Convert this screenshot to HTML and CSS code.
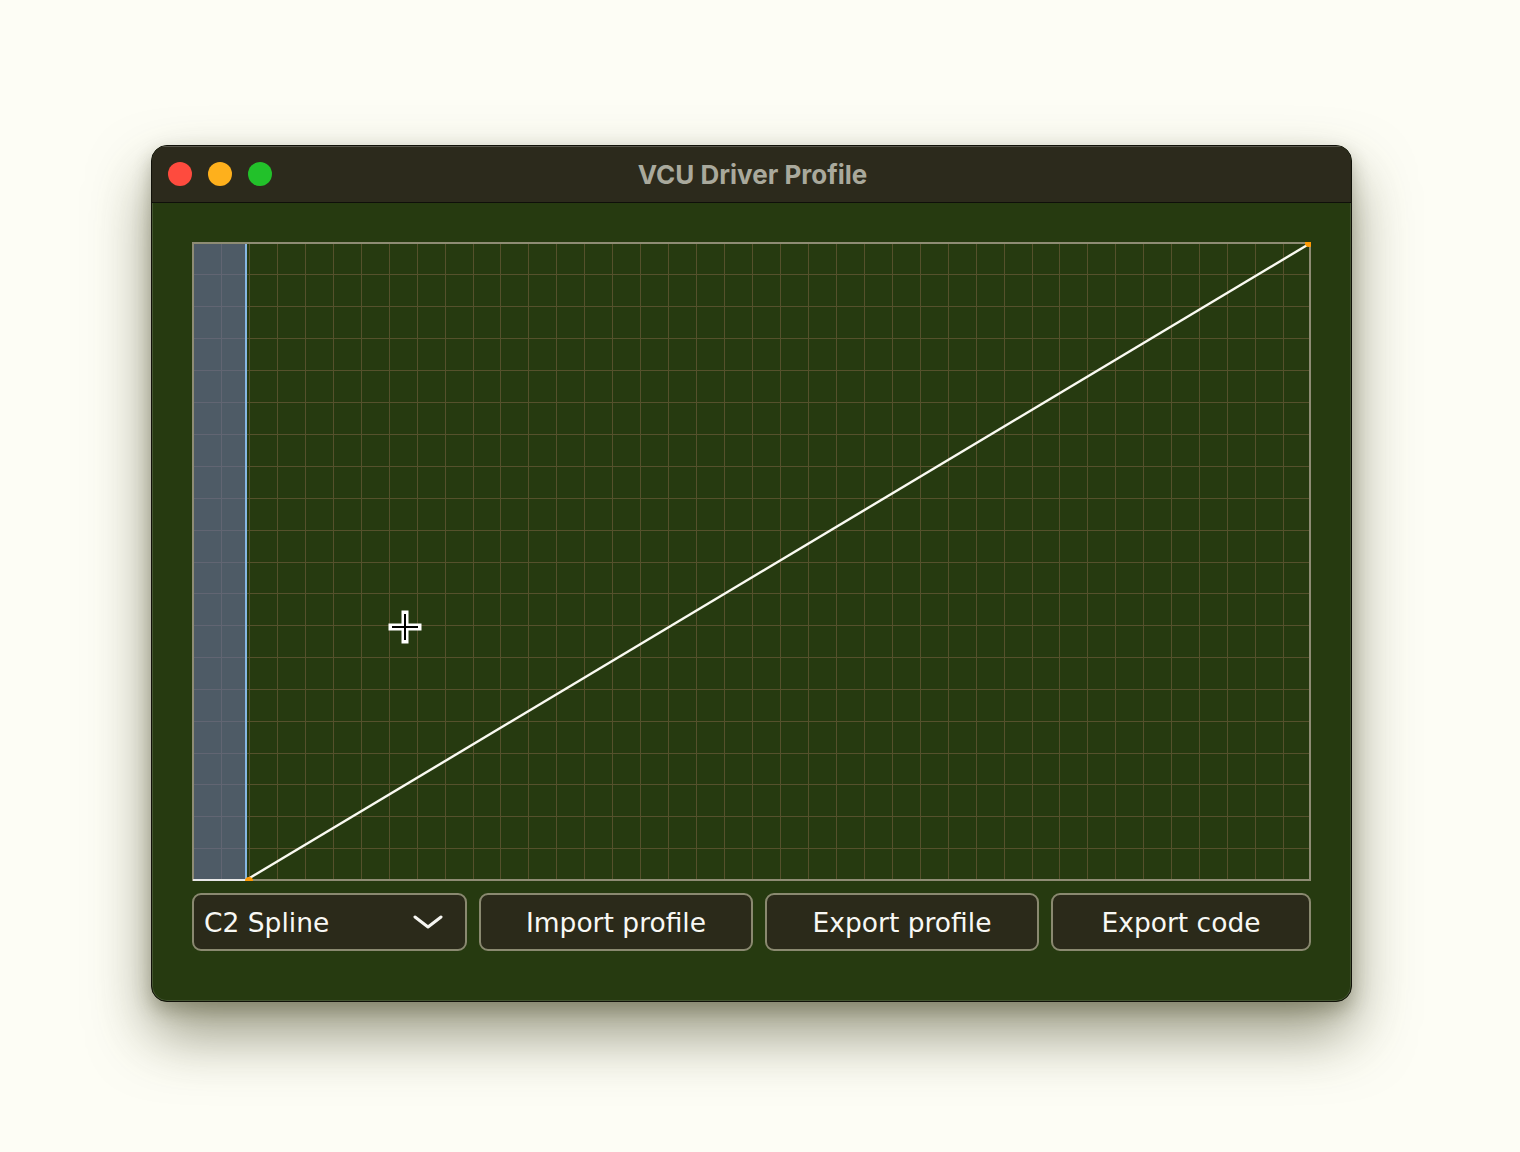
FILE: index.html
```html
<!DOCTYPE html>
<html lang="en">
<head>
<meta charset="utf-8">
<title>VCU Driver Profile</title>
<link rel="stylesheet" href="styles.css">
</head>
<body>
<div class="window">
  <div class="titlebar">
    <div class="lights">
      <span class="light red"></span>
      <span class="light yellow"></span>
      <span class="light green"></span>
    </div>
    <div class="title">VCU Driver Profile</div>
  </div>
  <div class="content">
    <div class="graph">
      <svg class="plot" width="1119" height="639" viewBox="0 0 1119 639">
        <path class="grid" d="M29.5 1V638M57.5 1V638M85.5 1V638M113.5 1V638M141.5 1V638M169.5 1V638M197.5 1V638M225.5 1V638M253.5 1V638M281.5 1V638M308.5 1V638M336.5 1V638M364.5 1V638M392.5 1V638M420.5 1V638M448.5 1V638M476.5 1V638M504.5 1V638M532.5 1V638M560.5 1V638M588.5 1V638M616.5 1V638M644.5 1V638M672.5 1V638M700.5 1V638M728.5 1V638M756.5 1V638M784.5 1V638M812.5 1V638M840.5 1V638M867.5 1V638M895.5 1V638M923.5 1V638M951.5 1V638M979.5 1V638M1007.5 1V638M1035.5 1V638M1063.5 1V638M1091.5 1V638M1 32.5H1118M1 64.5H1118M1 96.5H1118M1 128.5H1118M1 160.5H1118M1 192.5H1118M1 224.5H1118M1 256.5H1118M1 288.5H1118M1 320.5H1118M1 351.5H1118M1 383.5H1118M1 415.5H1118M1 447.5H1118M1 479.5H1118M1 511.5H1118M1 542.5H1118M1 574.5H1118M1 606.5H1118"/>
        <rect class="deadzone" x="1" y="1" width="53" height="637"/>
        <line class="deadline" x1="54" y1="1" x2="54" y2="638"/>
        <rect class="frame" x="1" y="1" width="1117" height="637"/>
        <line class="base" x1="1" y1="638" x2="54" y2="638"/>
        <line class="curve" x1="56" y1="637" x2="1117" y2="2"/>
        <circle class="knot" cx="57" cy="639" r="4"/>
        <circle class="knot" cx="1117" cy="1" r="4"/>
        <g class="cursor">
          <path class="cursor-out" d="M213 372V398M200 385H226"/>
          <path class="cursor-in" d="M213 372V398M200 385H226"/>
        </g>
      </svg>
    </div>
    <div class="controls">
      <div class="btn select">
        <span>C2 Spline</span>
        <svg class="chevron" width="30" height="16" viewBox="0 0 30 16"><path d="M2 3L15 13L28 3"/></svg>
      </div>
      <div class="btn">Import profile</div>
      <div class="btn">Export profile</div>
      <div class="btn">Export code</div>
    </div>
  </div>
</div>
</body>
</html>
```

FILE: styles.css
```css
html, body {
  margin: 0;
  padding: 0;
}
body {
  width: 1520px;
  height: 1152px;
  background: #fdfdf5;
  padding: 145px 0 0 151px;
  box-sizing: border-box;
  font-family: "DejaVu Sans", sans-serif;
}
.window {
  width: 1201px;
  height: 857px;
  box-sizing: border-box;
  border: 1px solid #111109;
  border-radius: 16px;
  background: #263a10;
  box-shadow: inset 0 0 0 1px rgba(255,255,255,0.14), 0 32px 60px rgba(70, 70, 35, 0.55), 0 8px 18px rgba(60,60,30,0.3);
  overflow: hidden;
  display: flex;
  flex-direction: column;
}
.titlebar {
  height: 56px;
  flex: none;
  background: #2c2a1c;
  border-bottom: 1px solid #0f0f0a;
  position: relative;
  display: flex;
  align-items: center;
  box-shadow: inset 0 1px 0 rgba(255,255,255,0.22);
}
.lights {
  display: flex;
  gap: 16px;
  padding-left: 16px;
}
.light {
  width: 24px;
  height: 24px;
  border-radius: 50%;
  display: block;
}
.red { background: #fe4b3e; }
.yellow { background: #feb01c; }
.green { background: #22c12a; }
.title {
  position: absolute;
  left: 0;
  right: 0;
  top: 0;
  bottom: 0;
  display: flex;
  align-items: center;
  justify-content: center;
  font-family: "Inter", "Roboto", sans-serif;
  font-weight: 700;
  font-size: 26px;
  color: #a9a99c;
  padding-left: 2px;
}
.content {
  padding: 39px 40px 0 40px;
  display: flex;
  flex-direction: column;
  gap: 12px;
}
.graph {
  width: 1119px;
  height: 639px;
}
.plot {
  display: block;
}
.grid {
  stroke: #55512c;
  stroke-width: 1;
  fill: none;
}
.deadzone {
  fill: #6b74a6;
  fill-opacity: 0.58;
}
.deadline {
  stroke: #86b6e2;
  stroke-width: 2;
}
.frame {
  fill: none;
  stroke: #8e8c74;
  stroke-width: 2;
}
.base {
  stroke: #e8e8e8;
  stroke-width: 2;
}
.curve {
  stroke: #fafaf2;
  stroke-width: 2.4;
}
.knot {
  fill: #ff9a05;
}
.cursor-out {
  stroke: #ffffff;
  stroke-width: 7;
  stroke-linecap: square;
  fill: none;
}
.cursor-in {
  stroke: #000000;
  stroke-width: 2;
  fill: none;
}
.controls {
  display: grid;
  grid-template-columns: 275px 274px 274px 260px;
  gap: 12px;
}
.btn {
  height: 58px;
  box-sizing: border-box;
  border: 2px solid #8a8970;
  border-radius: 9px;
  background: #2b2a1a;
  color: #f8f8f4;
  font-size: 26.5px;
  display: flex;
  align-items: center;
  justify-content: center;
}
.select {
  justify-content: space-between;
  padding: 0 22px 0 10px;
}
.chevron {
  display: block;
}
.chevron path {
  fill: none;
  stroke: #f6f6f2;
  stroke-width: 3;
  stroke-linecap: round;
  stroke-linejoin: round;
}
```
